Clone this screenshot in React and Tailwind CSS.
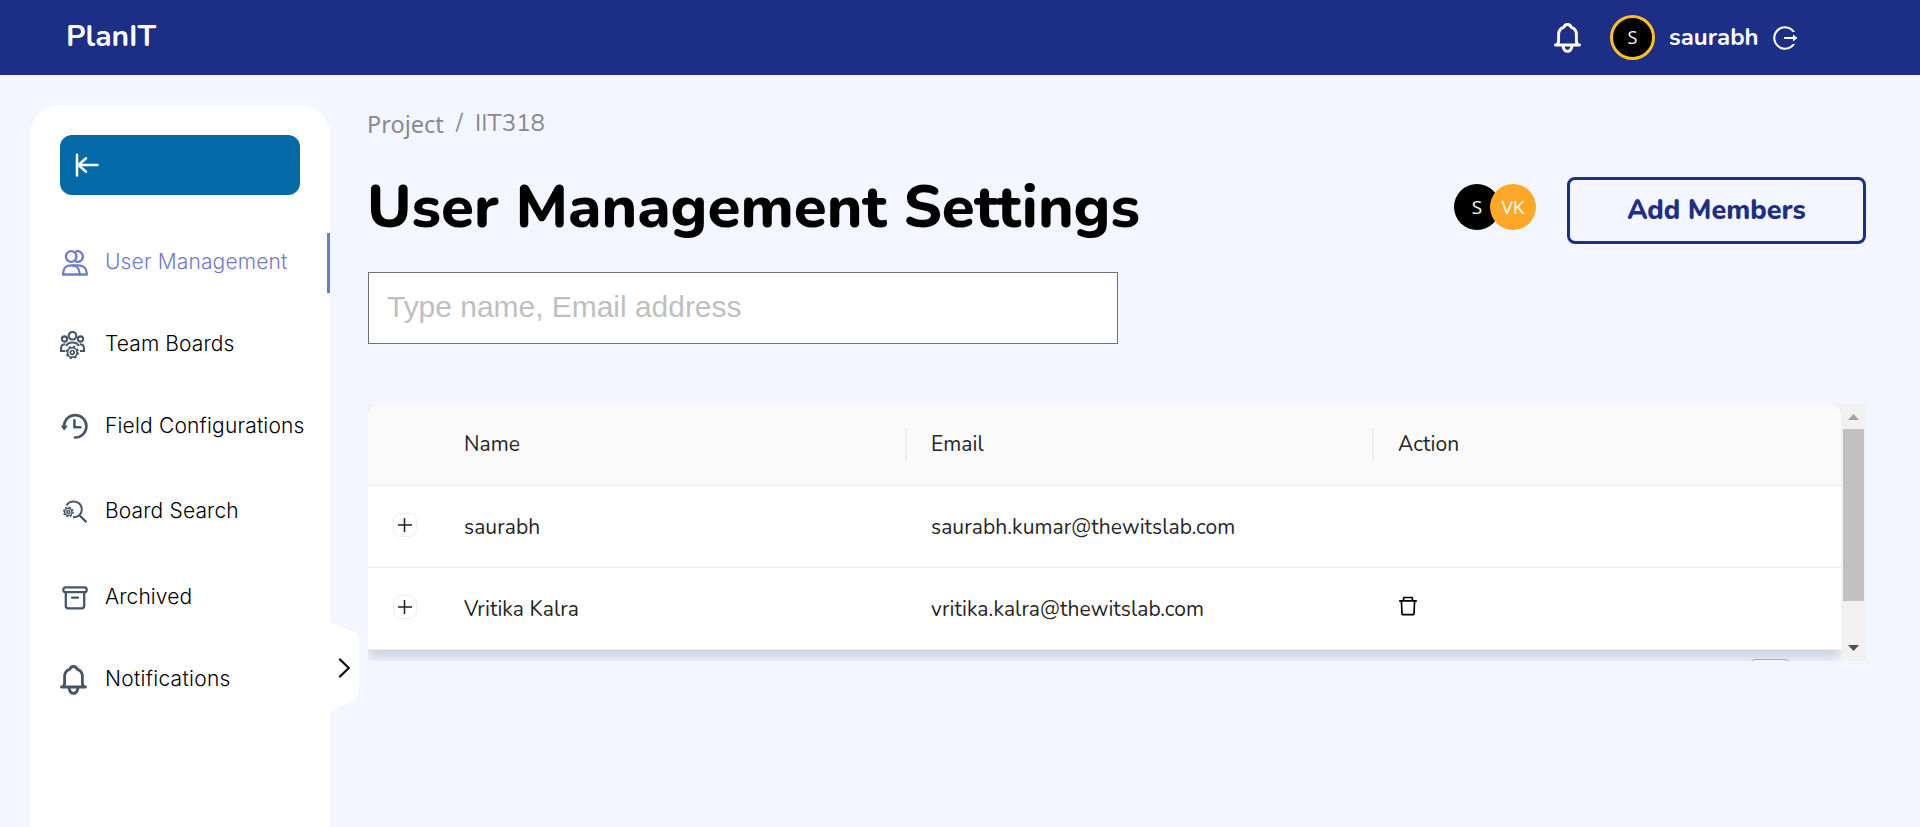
import React from "react";
import { AiOutlineLogout, AiOutlineDelete } from "react-icons/ai";

const nunito = "font-['Nunito','Open_Sans',sans-serif]";

function BellIcon({ className, sw = 2.2 }) {
  return (
    <svg viewBox="0 0 27 30" className={className} fill="none" stroke="currentColor" strokeWidth={sw} strokeLinejoin="round" strokeLinecap="round">
      <path d="M1.500 22h.8c1.500-.6 2.300-2 2.300-4.200v-6c0-3.900 1.800-6.500 5.300-7.600.4-1.800 1.700-2.700 3.600-2.700s3.200.9 3.600 2.700c3.500 1.100 5.300 3.700 5.300 7.600v6c0 2.200.8 3.600 2.300 4.200h.8z" />
      <path d="M9 22.800c.5 3.700 2.200 5.600 4.500 5.600s4-1.900 4.500-5.600" />
    </svg>
  );
}

function UsersIcon() {
  return (
    <svg viewBox="0 0 26 26" className="size-[26px]" fill="none" stroke="currentColor" strokeWidth="2.300">
      <circle cx="9.200" cy="6.500" r="5.300" />
      <path d="M13.300 1.700a5.300 5.300 0 1 1 0 9.600" />
      <path d="M1.200 24.500v-1.500c0-4.900 3.300-7.600 8-7.600s8.300 2.700 8.300 7.600v1.500z" />
      <path d="M10 15.400h6c5.200 0 8.700 2.700 8.700 7.600v1.500h-7.500" />
    </svg>
  );
}

function Gear({ cx, cy, r, sw }) {
  return (
    <g>
      <circle cx={cx} cy={cy} r={r} strokeWidth={sw} />
      <circle cx={cx} cy={cy} r={r + sw * 0.7} strokeWidth={sw * 0.9} strokeDasharray={`${(r + sw * 0.7) * 0.3927} ${(r + sw * 0.7) * 0.3927}`} />
      <circle cx={cx} cy={cy} r={r * 0.4} strokeWidth={sw} />
    </g>
  );
}

function TeamIcon() {
  return (
    <svg viewBox="0 0 25 28" className="-ml-[2px] -mt-px h-[28px] w-[25px]" fill="none" stroke="currentColor" strokeWidth="2.100">
      <circle cx="12.500" cy="4.700" r="3.800" />
      <circle cx="4.500" cy="8" r="2.600" />
      <circle cx="20.500" cy="8" r="2.600" />
      <path d="M5 20H1v-2.300c0-3 1.600-4.500 4.200-4.500M20 20h4v-2.300c0-3-1.600-4.500-4.200-4.500M6.200 15c1-2.400 3.300-3.500 6.300-3.500s5.300 1.100 6.300 3.500" />
      <Gear cx={12.300} cy={21.400} r={4.800} sw={1.700} />
    </svg>
  );
}

function HistoryIcon() {
  return (
    <svg viewBox="0 0 27 26" className="-ml-px -mt-[2px] h-[26px] w-[27px]" fill="none" stroke="currentColor" strokeWidth="2.600" strokeLinecap="round" strokeLinejoin="round">
      <path d="M3 13.300A11.200 11.200 0 1 1 14 24.500" />
      <path d="M13.400 7.200v7h5.900" />
      <path d="M.8 13.200h5L3.200 16.700z" fill="currentColor" strokeWidth="1.200" />
    </svg>
  );
}

function SearchIcon() {
  return (
    <svg viewBox="0 0 26 24" className="h-[24px] w-[26px]" fill="none" stroke="currentColor" strokeWidth="2">
      <path d="M4.500 5.400C6 2.700 8.600 1.400 11.800 1.400c4.800 0 8 3.500 8 8 0 4.600-3.400 7.800-8 7.800h-.8" />
      <path d="M17 15l7.500 7.200" strokeWidth="2.300" />
      <Gear cx={6.300} cy={11.900} r={3.700} sw={1.500} />
    </svg>
  );
}

function ArchiveIcon() {
  return (
    <svg viewBox="0 0 26 24" className="-mt-px h-[24px] w-[26px]" fill="none" stroke="currentColor" strokeWidth="2.300" strokeLinecap="round" strokeLinejoin="round">
      <rect x="1.400" y="1.400" width="23.200" height="4.800" rx="2" />
      <path d="M3.800 6.500v13.200a2.600 2.600 0 0 0 2.600 2.600h13.200a2.600 2.600 0 0 0 2.600-2.600V6.500M10 11.700h6" />
    </svg>
  );
}

const menu = [
  { label: "User Management", icon: <UsersIcon />, h: "h-[60px] mb-[22px]", ls: "tracking-[0.15px]", active: true },
  { label: "Team Boards", icon: <TeamIcon />, h: "h-[60px] mb-[22px]", ls: "tracking-[0.1px]" },
  { label: "Field Configurations", icon: <HistoryIcon />, h: "h-[60px] mb-[25px]", ls: "tracking-[0.18px]" },
  { label: "Board Search", icon: <SearchIcon />, h: "h-[60px] mb-[26px]", ls: "tracking-[0.15px]" },
  { label: "Archived", icon: <ArchiveIcon />, h: "h-[60px] mb-[22px]", ls: "tracking-[0.1px]" },
  { label: "Notifications", icon: <BellIcon sw={2.800} className="-ml-[2px] h-[30px] w-[27px]" />, h: "h-[60px]", ls: "tracking-[0.28px]" },
];

function Header() {
  return (
    <header className={`flex h-[75px] shrink-0 items-center justify-between bg-[#1d2e87] pl-[66px] pr-[121px] text-white ${nunito}`}>
      <div className="-mt-[3px] text-[30px] font-bold">PlanIT</div>
      <div className="flex items-center">
        <BellIcon sw={2.900} className="mr-[29px] h-[30px] w-[27px]" />
        <div className="mr-[14px] flex size-[45px] items-center justify-center rounded-full border-[3px] border-[#fbc21d] bg-black font-['Open_Sans',sans-serif] text-[18px]">S</div>
        <div className="-mt-[2px] mr-[13px] w-[89px] whitespace-nowrap text-[24px] font-bold leading-[30px]">saurabh</div>
        <AiOutlineLogout className="size-[28px]" />
      </div>
    </header>
  );
}

function Sidebar() {
  return (
    <aside className="relative mt-[30px] flex w-[300px] shrink-0 flex-col rounded-t-[30px] bg-white pt-[30px]">
      <button className="ml-[30px] flex h-[60px] w-[240px] items-center rounded-[12px] bg-[#036aa7] pl-[15px] text-white">
        <svg viewBox="0 0 24 24" className="size-[24px]" fill="none" stroke="currentColor" strokeWidth="2.500" strokeLinecap="round" strokeLinejoin="round">
          <path d="M2 1.800v20.700M22.500 12H3M11 5.300L3.500 12l7.500 6.800" />
        </svg>
      </button>
      <nav className="mt-[38px] flex flex-col">
        {menu.map((m) => (
          <div key={m.label} className={`flex items-center pl-[32px] ${m.h} ${m.active ? "border-r-[3px] border-[#6c7ccd] text-[#6c7ccd]" : "text-[#475569]"}`}>
            <div className="flex w-[43px] items-center">{m.icon}</div>
            <span className={`-mt-[2px] whitespace-nowrap font-['Inter',sans-serif] text-[21px] font-light leading-[30px] ${m.ls} ${m.active ? "" : "text-black"}`}>{m.label}</span>
          </div>
        ))}
      </nav>
      <svg viewBox="0 0 30 90" className="absolute left-[299px] top-[517px] h-[90px] w-[30px]" fill="none">
        <path d="M0 0h1l21 8.500q8 3 8 11V68q0 7-6 10.500L1 90H0z" fill="#fff" />
        <path d="M11 37.500l8.800 8.500-8.800 8.500" stroke="#111" strokeWidth="2.400" strokeLinecap="round" strokeLinejoin="round" />
      </svg>
    </aside>
  );
}

function Expand() {
  return (
    <div className="ml-[25px] flex size-[24px] items-center justify-center rounded-[8px] border border-[#efefef] bg-white">
      <svg viewBox="0 0 14 14" className="size-[14px]" stroke="#1f1f1f" strokeWidth="1.500">
        <path d="M0 7h14M6.500 0v14" />
      </svg>
    </div>
  );
}

function Row({ name, email, action }) {
  return (
    <div className="grid h-[82px] grid-cols-[96px_467px_467px_1fr] items-center border-b border-[#ededed] bg-white">
      <div className="-mt-[3px]"><Expand /></div>
      <div className="pt-[2px]">{name}</div>
      <div className="pt-[2px]">{email}</div>
      <div>{action}</div>
    </div>
  );
}

export default function App() {
  return (
    <div className="flex h-[827px] w-[1920px] flex-col overflow-hidden bg-[#f3f6ff]">
      <Header />
      <div className="flex min-h-0 flex-1 pl-[30px]">
        <Sidebar />
        <main className="ml-[38px] flex w-[1498px] flex-col">
          <div className="mt-[30px] flex h-[36px] items-center text-[#88898f]">
            <span className="-ml-[1px] mt-[1px] w-[89px] font-['Noto_Sans',sans-serif] text-[23.500px] leading-[36px]">Project</span>
            <span className={`w-[19px] text-[24px] leading-[36px] ${nunito}`}>/</span>
            <span className={`text-[24px] leading-[36px] ${nunito}`}>IIT318</span>
          </div>
          <div className="mt-[26px] flex h-[80px] items-center">
            <h1 className={`-ml-px flex-1 whitespace-nowrap text-[60px] font-extrabold leading-[80px] text-black ${nunito}`}>User Management Settings</h1>
            <div className="mr-[31px] flex font-['Open_Sans',sans-serif] text-[19px] text-white">
              <div className="flex size-[46px] items-center justify-center rounded-full bg-black">S</div>
              <div className="-ml-[10px] flex size-[46px] items-center justify-center rounded-full bg-[#ffa726]">VK</div>
            </div>
            <button className={`mt-[7px] flex h-[67px] w-[299px] items-center justify-center rounded-[8px] border-[3px] border-[#1d2e87] pt-[2px] text-[27px] font-extrabold text-[#1d2e87] ${nunito}`}>Add Members</button>
          </div>
          <input
            className="mt-[25px] h-[72px] w-[750px] border border-[#6f6f7a] bg-white pb-[3px] pl-[18px] font-['Liberation_Sans',sans-serif] text-[30px] tracking-[-0.03px] placeholder:text-[#bfbfbf]"
            placeholder="Type name, Email address"
          />
          <div className="mt-[60px] flex h-[257px] overflow-hidden">
            <div className={`w-[1473px] shrink-0 overflow-hidden text-[21px] tracking-[0.07px] text-[#262626] ${nunito}`}>
              <div className="rounded-t-[12px] bg-white shadow-[0_7px_14px_rgba(40,40,70,0.2)]">
                <div className="grid h-[82px] grid-cols-[96px_467px_467px_1fr] items-center rounded-t-[12px] border-b border-[#ededed] bg-[#fafafa]">
                  <div />
                  <div className="mr-[24px] flex h-[34px] items-center border-r-2 border-[#f0f0f0] pt-px">Name</div>
                  <div className="mr-[24px] flex h-[34px] items-center border-r-2 border-[#f0f0f0] pt-px">Email</div>
                  <div className="pt-px">Action</div>
                </div>
                <Row name="saurabh" email="saurabh.kumar@thewitslab.com" />
                <Row name="Vritika Kalra" email="vritika.kalra@thewitslab.com" action={<AiOutlineDelete className="-ml-[2px] -mt-[5px] size-[24px] text-black" />} />
              </div>
              <div className="relative ml-auto mr-[49px] mt-[9px] h-[36px] w-[44px] rounded-[8px] border border-[#aaa] bg-white/60" />
            </div>
            <div className="flex w-[25px] flex-col items-center bg-[#f1f1f1]">
              <svg viewBox="0 0 25 25" className="size-[25px] shrink-0"><path d="M7 16l5.500-6 5.500 6z" fill="#a3a3a3" /></svg>
              <div className="h-[172px] w-[21px] bg-[#c1c1c1]" />
              <svg viewBox="0 0 25 25" className="mt-auto size-[25px] shrink-0"><path d="M7 9l5.500 6 5.500-6z" fill="#505050" /></svg>
            </div>
          </div>
        </main>
      </div>
    </div>
  );
}
